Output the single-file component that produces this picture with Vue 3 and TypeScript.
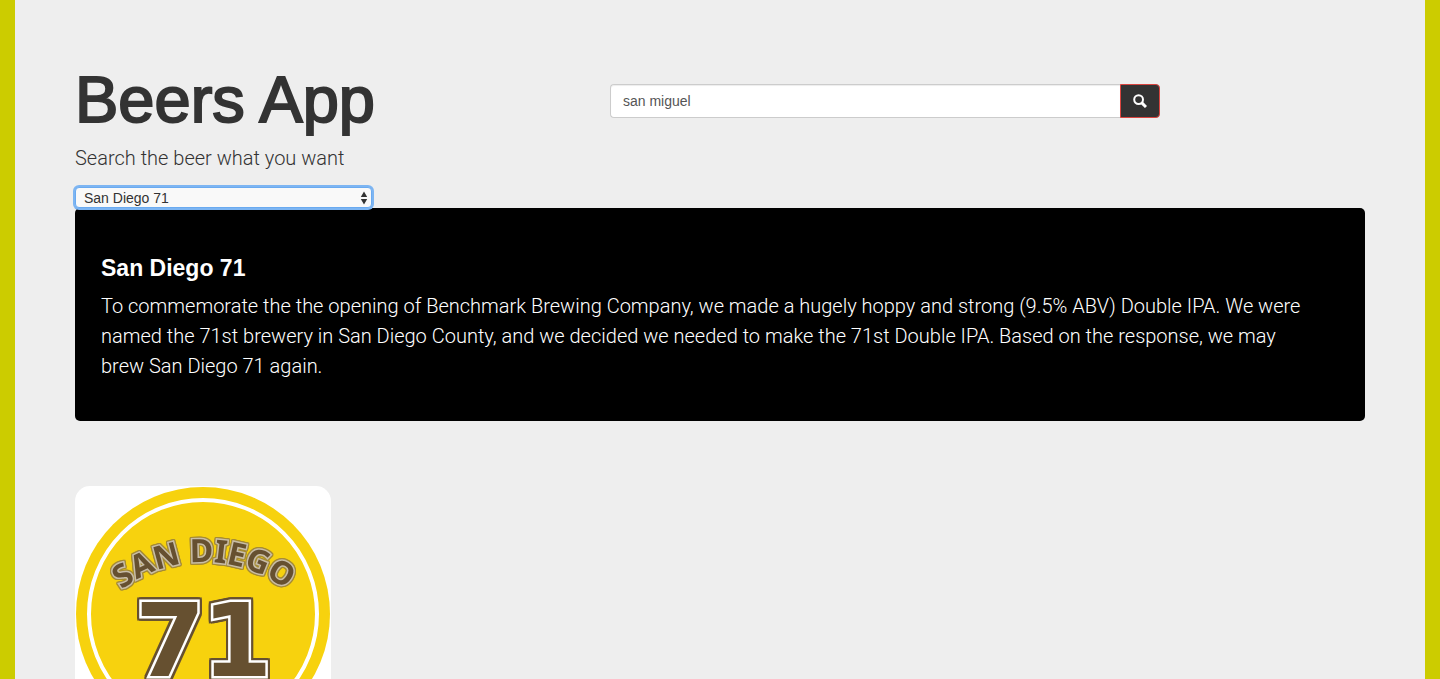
<script setup lang="ts">
import { ref } from 'vue'

interface Beer {
  name: string
  description: string
}

const beers: Beer[] = [
  {
    name: 'San Diego 71',
    description:
      'To commemorate the the opening of Benchmark Brewing Company, we made a hugely hoppy and strong (9.5% ABV) Double IPA. We were named the 71st brewery in San Diego County, and we decided we needed to make the 71st Double IPA. Based on the response, we may brew San Diego 71 again.',
  },
]

const query = ref('san miguel')
const selected = ref<Beer>(beers[0])
</script>

<template>
  <main class="page">
    <div class="top">
      <header class="intro">
        <h1>Beers App</h1>
        <p class="tagline">Search the beer what you want</p>
      </header>
      <form class="search" role="search" @submit.prevent>
        <input v-model="query" type="text" aria-label="Search beers" />
        <button type="submit" aria-label="Search">
          <svg viewBox="0 0 14 14" aria-hidden="true">
            <circle cx="5.6" cy="5.6" r="4.4" />
            <path class="handle" d="M8.6 8.6 L13 13" />
          </svg>
        </button>
      </form>
    </div>

    <div class="picker">
      <select v-model="selected" aria-label="Beer">
        <option v-for="beer in beers" :key="beer.name" :value="beer">{{ beer.name }}</option>
      </select>
      <svg class="arrows" viewBox="0 0 8 14" aria-hidden="true">
        <path d="M4 0.5 L7.2 6 H0.8 Z M0.8 8 H7.2 L4 13.5 Z" />
      </svg>
    </div>

    <article class="panel">
      <h2>{{ selected.name }}</h2>
      <p>{{ selected.description }}</p>
    </article>

    <svg class="label" viewBox="0 0 256 256" role="img" aria-label="San Diego 71 label">
      <rect width="256" height="256" fill="#fff" />
      <circle cx="128" cy="128" r="127" fill="#f7d20e" />
      <circle cx="128" cy="128" r="114" fill="none" stroke="#fff" stroke-width="4" />
      <path id="label-arc" d="M37 112 A135.5 135.5 0 0 1 221 112" fill="none" />
      <text class="arc-text"><textPath href="#label-arc" startOffset="50%">SAN DIEGO</textPath></text>
      <text class="number" x="60 127" y="190">71</text>
    </svg>
  </main>
</template>

<style>
body {
  background: #eee;
}
</style>

<style scoped>
* {
  box-sizing: border-box;
}

.page {
  min-height: 100vh;
  padding: 68px 60px 60px;
  border: solid #cc0;
  border-width: 0 15px;
  color: #333;
  background: #eee;
  font-family: "Liberation Sans", Arial, sans-serif;
}

.top {
  display: grid;
  grid-template-columns: 107fr 110fr 41fr;
  align-items: start;
}

h1 {
  margin: 0;
  font-size: 65px;
  font-weight: 500;
  line-height: 64px;
  -webkit-text-stroke: 2px #333;
}

.tagline {
  margin: 11px 0 14px;
  font-family: Roboto, "Liberation Sans", sans-serif;
  font-size: 20px;
  font-weight: 300;
  line-height: 30px;
}

.search {
  display: flex;
  height: 34px;
  margin-top: 16px;
}

.search input {
  flex: 1;
  min-width: 0;
  padding: 0 12px;
  border: 1px solid #ccc;
  border-right: 0;
  border-radius: 4px 0 0 4px;
  outline: 0;
  color: #555;
  background: #fff;
  box-shadow: inset 0 1px 1px rgba(0, 0, 0, 0.075);
  font: 14px "Liberation Sans", Arial, sans-serif;
}

.search button {
  display: flex;
  align-items: center;
  justify-content: center;
  width: 40px;
  padding: 0;
  border: 1px solid #d9443f;
  border-radius: 0 4px 4px 0;
  background: #333;
}

.search button svg {
  width: 14px;
  height: 14px;
  fill: none;
  stroke: #fff;
  stroke-width: 2;
}

.search button .handle {
  stroke-width: 3;
}

.picker {
  position: relative;
  width: 297px;
  max-width: 100%;
}

select {
  display: block;
  width: 100%;
  height: 21px;
  padding: 0 24px 0 8px;
  border: 1px solid #6aaaf0;
  border-radius: 4px;
  outline: 0;
  color: #333;
  background: #f9f9f9;
  box-shadow: 0 0 0 2px #7db5f2;
  appearance: none;
  font: 14px "Liberation Sans", Arial, sans-serif;
}

.arrows {
  position: absolute;
  top: 4px;
  right: 4px;
  width: 8px;
  height: 14px;
  fill: #333;
  pointer-events: none;
}

.panel {
  padding: 48px 48px 40px 26px;
  border-radius: 5px;
  color: #fff;
  background: #000;
}

.panel h2 {
  margin: 0 0 10px;
  font-size: 23px;
  font-weight: 700;
  line-height: 25px;
}

.panel p {
  margin: 0;
  font-family: Roboto, "Liberation Sans", sans-serif;
  font-size: 20px;
  font-weight: 300;
  line-height: 30px;
}

.label {
  display: block;
  width: 256px;
  height: 256px;
  margin-top: 65px;
  border-radius: 15px;
}

.arc-text {
  fill: #665030;
  stroke: #c8bda8;
  stroke-width: 3px;
  paint-order: stroke;
  font-family: "Noto Sans", sans-serif;
  font-size: 32px;
  font-weight: 700;
  text-anchor: middle;
  filter: drop-shadow(1px 0 0 #a58b35) drop-shadow(-1px 0 0 #a58b35)
    drop-shadow(0 1px 0 #a58b35) drop-shadow(0 -1px 0 #a58b35);
}

.number {
  fill: #665030;
  stroke: #fff;
  stroke-width: 5px;
  paint-order: stroke;
  font-family: "DejaVu Sans", sans-serif;
  font-size: 101px;
  font-weight: 700;
  filter: drop-shadow(2px 0 0 #665030) drop-shadow(-2px 0 0 #665030)
    drop-shadow(0 2px 0 #665030) drop-shadow(0 -2px 0 #665030);
}
</style>
